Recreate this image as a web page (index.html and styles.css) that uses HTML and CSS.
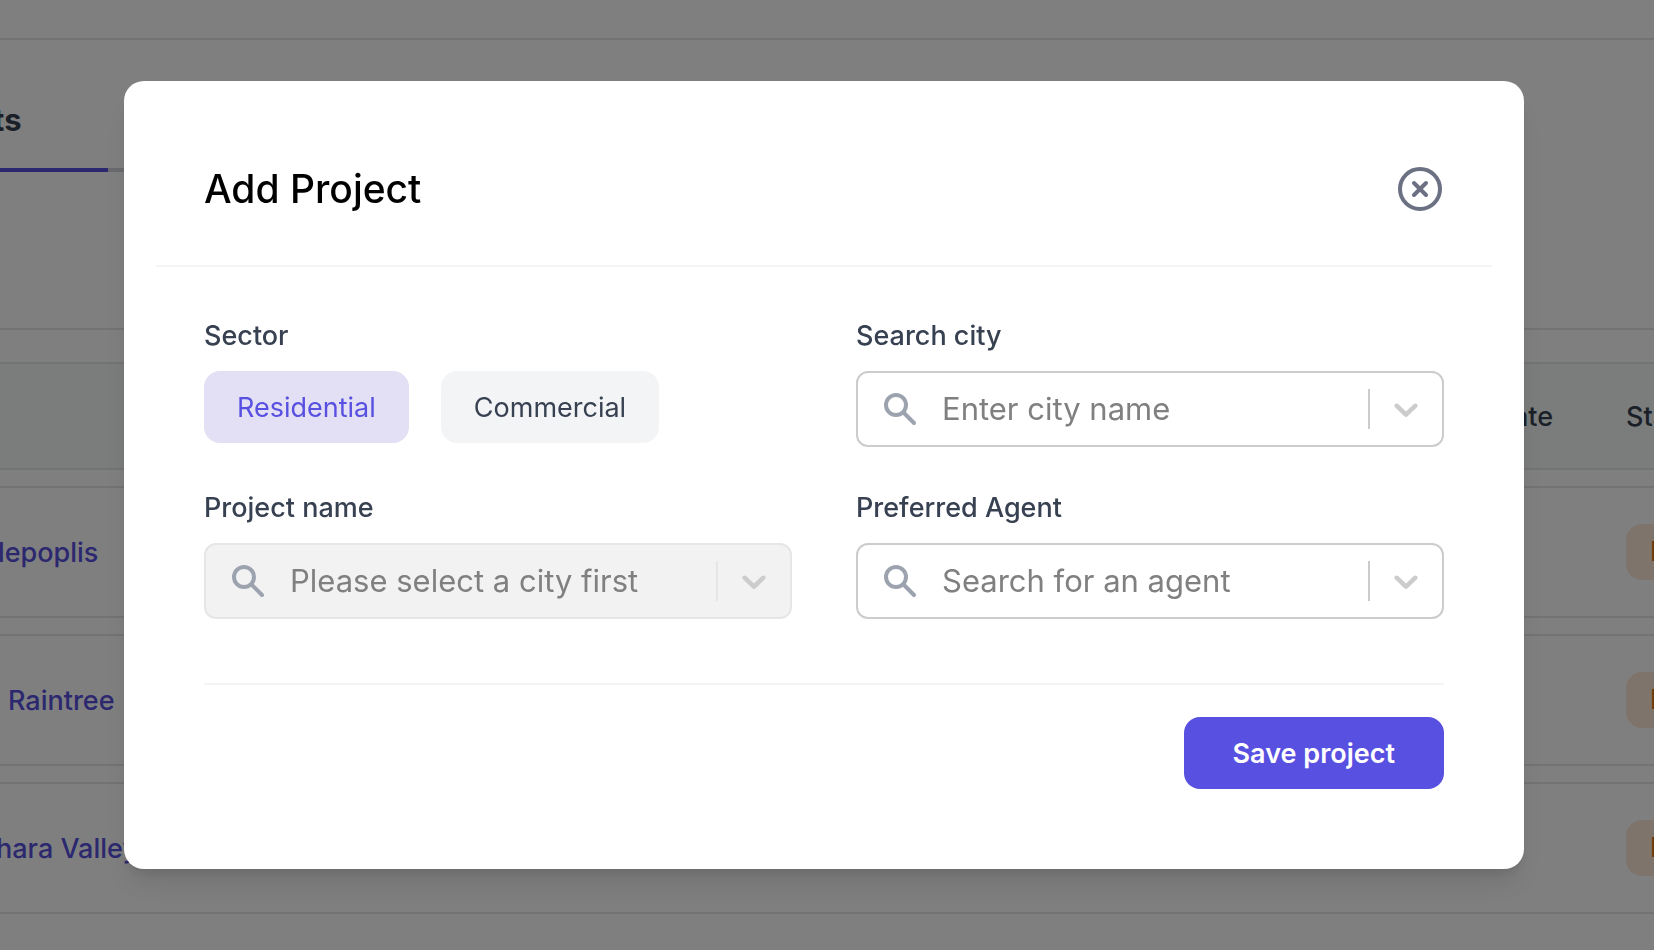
FILE: index.html
```html
<!DOCTYPE html>
<html lang="en">
<head>
<meta charset="utf-8">
<meta name="viewport" content="width=device-width, initial-scale=1">
<title>Add Project</title>
<link rel="stylesheet" href="styles.css">
</head>
<body>
<div class="page">
  <header class="topbar"></header>
  <nav class="tabs">
    <div class="tab-list"><a class="tab" href="#projects">ts</a></div>
  </nav>
  <table class="table">
    <thead>
      <tr><th class="col-name"></th><th class="col-date">Date</th><th class="col-status">Status</th></tr>
    </thead>
    <tbody>
      <tr><td class="col-name"><a class="name name-cut" href="#p1">depoplis</a></td><td></td><td class="col-status"><span class="pill">In progress</span></td></tr>
      <tr><td class="col-name"><a class="name name-inset" href="#p2">Raintree</a></td><td></td><td class="col-status"><span class="pill">In progress</span></td></tr>
      <tr><td class="col-name"><a class="name name-edge" href="#p3">hara Valley</a></td><td></td><td class="col-status"><span class="pill">In progress</span></td></tr>
    </tbody>
  </table>
</div>

<div class="overlay">
  <form class="modal" role="dialog" aria-modal="true" aria-labelledby="title">
    <div class="modal-header">
      <h1 class="title" id="title">Add Project</h1>
      <button class="close" type="button" aria-label="Close">
        <svg viewBox="0 0 48 48" width="48" height="48" fill="none" stroke="currentColor" stroke-width="4" stroke-linecap="round"><circle cx="24" cy="24" r="20"/><path d="M18 18l12 12M30 18L18 30"/></svg>
      </button>
    </div>
    <div class="modal-body">
      <div class="fields">
        <fieldset class="field">
          <legend class="label">Sector</legend>
          <div class="choices">
            <button class="choice choice-on" type="button" aria-pressed="true">Residential</button>
            <button class="choice" type="button" aria-pressed="false">Commercial</button>
          </div>
        </fieldset>
        <div class="field">
          <label class="label" for="city">Search city</label>
          <div class="select">
            <svg class="search-icon" viewBox="0 0 40 40" fill="none" stroke="currentColor" stroke-width="4" stroke-linecap="round"><circle cx="16" cy="16" r="10"/><path d="M23.500 23.500L34 34"/></svg>
            <input class="input" id="city" type="text" placeholder="Enter city name">
            <span class="separator"></span>
            <svg class="chevron" viewBox="0 0 20 20"><path d="M4.516 7.548c0.436-0.446 1.043-0.481 1.576 0l3.908 3.747 3.908-3.747c0.533-0.481 1.141-0.446 1.574 0 0.436 0.445 0.408 1.197 0 1.615-0.406 0.418-4.695 4.502-4.695 4.502-0.217 0.223-0.502 0.335-0.787 0.335s-0.570-0.112-0.789-0.335c0 0-4.287-4.084-4.695-4.502s-0.436-1.170 0-1.615z"/></svg>
          </div>
        </div>
        <div class="field">
          <label class="label" for="project">Project name</label>
          <div class="select select-disabled">
            <svg class="search-icon" viewBox="0 0 40 40" fill="none" stroke="currentColor" stroke-width="4" stroke-linecap="round"><circle cx="16" cy="16" r="10"/><path d="M23.500 23.500L34 34"/></svg>
            <input class="input" id="project" type="text" placeholder="Please select a city first" disabled>
            <span class="separator"></span>
            <svg class="chevron" viewBox="0 0 20 20"><path d="M4.516 7.548c0.436-0.446 1.043-0.481 1.576 0l3.908 3.747 3.908-3.747c0.533-0.481 1.141-0.446 1.574 0 0.436 0.445 0.408 1.197 0 1.615-0.406 0.418-4.695 4.502-4.695 4.502-0.217 0.223-0.502 0.335-0.787 0.335s-0.570-0.112-0.789-0.335c0 0-4.287-4.084-4.695-4.502s-0.436-1.170 0-1.615z"/></svg>
          </div>
        </div>
        <div class="field">
          <label class="label" for="agent">Preferred Agent</label>
          <div class="select">
            <svg class="search-icon" viewBox="0 0 40 40" fill="none" stroke="currentColor" stroke-width="4" stroke-linecap="round"><circle cx="16" cy="16" r="10"/><path d="M23.500 23.500L34 34"/></svg>
            <input class="input" id="agent" type="text" placeholder="Search for an agent">
            <span class="separator"></span>
            <svg class="chevron" viewBox="0 0 20 20"><path d="M4.516 7.548c0.436-0.446 1.043-0.481 1.576 0l3.908 3.747 3.908-3.747c0.533-0.481 1.141-0.446 1.574 0 0.436 0.445 0.408 1.197 0 1.615-0.406 0.418-4.695 4.502-4.695 4.502-0.217 0.223-0.502 0.335-0.787 0.335s-0.570-0.112-0.789-0.335c0 0-4.287-4.084-4.695-4.502s-0.436-1.170 0-1.615z"/></svg>
          </div>
        </div>
      </div>
      <div class="modal-footer">
        <button class="save" type="submit">Save project</button>
      </div>
    </div>
  </form>
</div>
</body>
</html>
```
FILE: styles.css
```css
*, *::before, *::after { box-sizing: border-box; }

body {
  margin: 0;
  overflow: hidden;
  background: #fff;
  color: #374151;
  font-family: Inter, "Liberation Sans", sans-serif;
  font-size: 27px;
  line-height: 40px;
}

button, input { font: inherit; }

/* Page behind the dialog */
.page { height: 100vh; overflow: hidden; }
.topbar { height: 40px; border-bottom: 2px solid #e5e7eb; }
.tabs { height: 290px; padding-top: 60px; border-bottom: 2px solid #e5e7eb; }
.tab-list { display: flex; width: 140px; border-bottom: 4px solid #d1d5db; }
.tab {
  width: 108px;
  height: 72px;
  margin-bottom: -4px;
  border-bottom: 4px solid #5850e0;
  color: #374151;
  font-size: 31px;
  font-weight: 700;
  text-decoration: none;
  text-indent: -7px;
}

.table {
  width: 100%;
  margin-top: 16px;
  border-spacing: 0 16px;
  table-layout: fixed;
}
.table th, .table td {
  padding: 2px 0 0;
  border: solid #e5e7eb;
  border-width: 2px 0;
  text-align: left;
  white-space: nowrap;
}
.table th { height: 108px; background: #f4fbf8; color: #374151; font-weight: 500; }
.table td { height: 132px; }
.table td.col-status { padding: 0; }
.table .col-date { padding-right: 73px; text-align: right; }
.table .col-status { width: 28px; }
.name { color: #5850e0; font-weight: 500; text-decoration: none; }
.name-cut { margin-left: -12px; }
.name-inset { margin-left: 8px; }
.name-edge { margin-left: -4px; }
.pill {
  display: inline-block;
  height: 56px;
  padding: 8px 24px;
  border-radius: 16px;
  background: #ffe8d8;
  color: #d9731a;
  font-weight: 500;
}

/* Dialog */
.overlay {
  position: fixed;
  inset: 0;
  display: flex;
  align-items: center;
  padding: 0 130px 0 124px;
  background: rgba(0, 0, 0, 0.5);
}
.modal {
  flex: 1;
  padding: 80px 32px;
  border-radius: 20px;
  background: #fff;
  box-shadow: 0 20px 30px -6px rgba(0, 0, 0, 0.1), 0 8px 12px -4px rgba(0, 0, 0, 0.1);
}
.modal-header {
  display: flex;
  align-items: center;
  justify-content: space-between;
  padding: 0 48px 48px;
  border-bottom: 2px solid #f3f4f6;
}
.title { margin: 0; color: #000; font-size: 39px; font-weight: 500; line-height: 56px; }
.close { display: flex; padding: 0; border: 0; background: none; color: #6b7083; }

.modal-body { padding: 48px 48px 0; }
.fields { display: grid; grid-template-columns: 1fr 1fr; gap: 40px 64px; }
.field { min-width: 0; margin: 0; padding: 0; border: 0; }
.label { display: block; margin-bottom: 14px; padding: 0; font-weight: 500; line-height: 42px; }

.choices { display: flex; gap: 32px; }
.choice {
  height: 72px;
  padding: 2px 33px 0;
  border: 0;
  border-radius: 16px;
  background: #f3f4f6;
  color: #374151;
}
.choice-on { background: #e3dff5; color: #5850e0; }

.select {
  display: flex;
  align-items: center;
  height: 76px;
  padding: 0 16px 0 22px;
  border: 2px solid #ccc;
  border-radius: 12px;
}
.select-disabled { border-color: #e6e6e6; background: #f2f2f2; }
.search-icon { flex: none; width: 40px; height: 40px; color: #9ca3af; }
.input {
  flex: 1;
  min-width: 0;
  padding: 0 0 0 22px;
  border: 0;
  outline: 0;
  background: none;
  font-size: 31px;
}
.input::placeholder { color: #808080; opacity: 1; }
.separator { width: 2px; height: 40px; margin-right: 16px; background: #ccc; }
.select-disabled .separator { background: #e6e6e6; }
.chevron { flex: none; width: 40px; height: 40px; fill: #ccc; }

.modal-footer {
  display: flex;
  justify-content: flex-end;
  margin-top: 64px;
  padding-top: 32px;
  border-top: 2px solid #f3f4f6;
}
.save {
  height: 72px;
  padding: 2px 49px 0;
  border: 0;
  border-radius: 16px;
  background: #5850e0;
  color: #fff;
  font-weight: 600;
}
```
